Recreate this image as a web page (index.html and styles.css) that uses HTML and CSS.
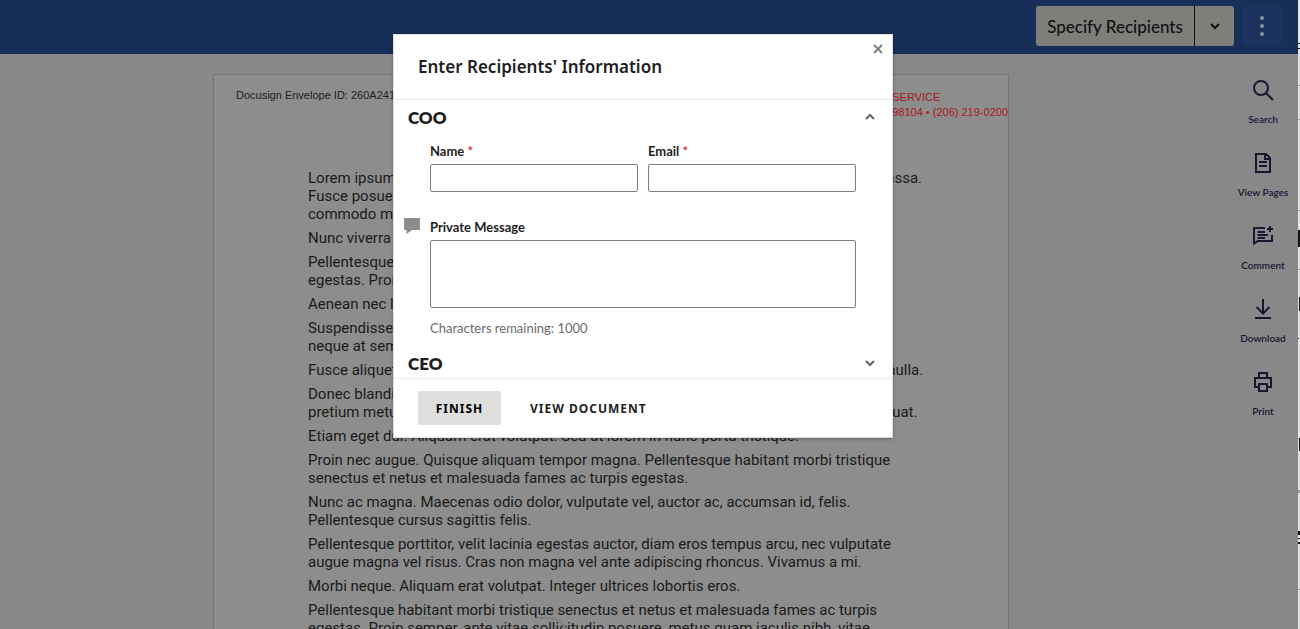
FILE: index.html
```html
<!DOCTYPE html>
<html lang="en">
<head>
<meta charset="utf-8">
<title>Specify Recipients</title>
<link rel="stylesheet" href="styles.css">
</head>
<body>
<div class="viewer">
  <header class="topbar">
    <div class="split">
      <button class="split-main" type="button">Specify Recipients</button>
      <button class="split-more" type="button" aria-label="More actions">
        <svg width="12" height="8" viewBox="0 0 12 8"><path d="M2 2l4 4 4-4" fill="none" stroke="#111" stroke-width="2"/></svg>
      </button>
    </div>
    <button class="menu" type="button" aria-label="Menu">
      <svg width="6" height="22" viewBox="0 0 6 22" fill="#8b93a5"><circle cx="3" cy="3" r="2"/><circle cx="3" cy="11" r="2"/><circle cx="3" cy="19" r="2"/></svg>
    </button>
  </header>
  <div class="workspace">
    <main class="canvas">
      <article class="page">
        <div class="page-head">
          <span class="envelope">Docusign Envelope ID: 260A2413</span>
          <div class="service"><span>SERVICE</span><span class="service-phone">98104 • (206) 219-0200</span></div>
        </div>
        <div class="copy">
          <p>Lorem ipsum dolor sit amet, consectetuer adipiscing elit. Maecenas porttitor congue massa.<br>Fusce posuere, magna sed pulvinar ultricies, purus lectus malesuada libero, sit amet<br>commodo magna eros quis urna.</p>
          <p>Nunc viverra imperdiet enim. Fusce est. Vivamus a tellus.</p>
          <p>Pellentesque habitant morbi tristique senectus et netus et malesuada fames ac turpis<br>egestas. Proin pharetra nonummy pede. Mauris et orci.</p>
          <p>Aenean nec lorem. In porttitor. Donec laoreet nonummy augue.</p>
          <p>Suspendisse dui purus, scelerisque at, vulputate vitae, pretium mattis, nunc. Mauris<br>neque at sem venenatis eleifend. Ut nonummy.</p>
          <p>Fusce aliquet pede non pede. Suspendisse dapibus lorem pellentesque magna. Integer nulla.</p>
          <p>Donec blandit feugiat ligula. Donec hendrerit, felis et imperdiet euismod, purus ipsum<br>pretium metus, in lacinia nulla nisl eget sapien. Donec ut est in lectus consequat consequat.</p>
          <p>Etiam eget dui. Aliquam erat volutpat. Sed at lorem in nunc porta tristique.</p>
          <p>Proin nec augue. Quisque aliquam tempor magna. Pellentesque habitant morbi tristique<br>senectus et netus et malesuada fames ac turpis egestas.</p>
          <p>Nunc ac magna. Maecenas odio dolor, vulputate vel, auctor ac, accumsan id, felis.<br>Pellentesque cursus sagittis felis.</p>
          <p>Pellentesque porttitor, velit lacinia egestas auctor, diam eros tempus arcu, nec vulputate<br>augue magna vel risus. Cras non magna vel ante adipiscing rhoncus. Vivamus a mi.</p>
          <p>Morbi neque. Aliquam erat volutpat. Integer ultrices lobortis eros.</p>
          <p>Pellentesque habitant morbi tristique senectus et netus et malesuada fames ac turpis<br>egestas. Proin semper, ante vitae sollicitudin posuere, metus quam iaculis nibh, vitae</p>
        </div>
        <svg class="watermark" width="150" height="14" viewBox="0 0 150 14" aria-hidden="true"><path d="M0 1h24M118 1h14q10 1 14 10" fill="none" stroke="#808080" stroke-width="2"/></svg>
      </article>
    </main>
    <nav class="tools">
      <button class="tool" type="button">
        <svg width="24" height="24" viewBox="0 0 24 24"><circle cx="10" cy="10" r="7"/><path d="M15 15l7 7"/></svg>
        <span>Search</span>
      </button>
      <button class="tool" type="button">
        <svg width="24" height="24" viewBox="0 0 24 24"><path d="M5 3h10l4 4v14H5zM14 3v5h5M8 11h8M8 15h8"/></svg>
        <span>View Pages</span>
      </button>
      <button class="tool" type="button">
        <svg width="24" height="24" viewBox="0 0 24 24"><path d="M14 4H3v15.500l4-2.500h14v-6M19 2v6M16 5h6M6.500 8H14M6.500 11H17M6.500 14H14"/></svg>
        <span>Comment</span>
      </button>
      <button class="tool" type="button">
        <svg width="24" height="24" viewBox="0 0 24 24"><path d="M12 2v14M5.500 10l6.500 6.500 6.500-6.500M4 21h16"/></svg>
        <span>Download</span>
      </button>
      <button class="tool" type="button">
        <svg width="24" height="24" viewBox="0 0 24 24"><path d="M8 8V3h8v5M8 17H4V8h16v9h-4M8 14h8v7H8z"/></svg>
        <span>Print</span>
      </button>
    </nav>
  </div>
  <div class="overlay">
    <form class="dialog" role="dialog" aria-labelledby="dialog-title">
      <button class="close" type="button" aria-label="Close">
        <svg width="10" height="10" viewBox="0 0 10 10"><path d="M1 1l8 8M9 1l-8 8" fill="none" stroke="#808080" stroke-width="2"/></svg>
      </button>
      <header class="dialog-head"><h1 id="dialog-title">Enter Recipients' Information</h1></header>
      <section class="role">
        <button class="role-head" type="button" aria-expanded="true">COO
          <svg width="12" height="8" viewBox="0 0 12 8"><path d="M2 6l4-4 4 4"/></svg>
        </button>
        <div class="role-body">
          <div class="pair">
            <div class="field"><label for="name">Name <span class="req">*</span></label><input id="name" type="text"></div>
            <div class="field"><label for="email">Email <span class="req">*</span></label><input id="email" type="email"></div>
          </div>
          <div class="field message">
            <svg class="bubble" width="16" height="16" viewBox="0 0 16 16"><path d="M1 0h14q1 0 1 1v10q0 1-1 1H8l-5.500 4V12H1q-1 0-1-1V1q0-1 1-1z" fill="#8c8c8c"/></svg>
            <label for="message">Private Message</label>
            <textarea id="message"></textarea>
            <span class="count">Characters remaining: 1000</span>
          </div>
        </div>
        <button class="role-head" type="button" aria-expanded="false">CEO
          <svg width="12" height="8" viewBox="0 0 12 8"><path d="M2 2l4 4 4-4"/></svg>
        </button>
      </section>
      <footer class="dialog-foot">
        <button class="finish" type="submit">FINISH</button>
        <button class="view" type="button">VIEW DOCUMENT</button>
      </footer>
    </form>
  </div>
</div>
<aside class="edge">
  <svg width="2" height="629" viewBox="0 0 2 629"><path d="M0 43h2v1H0zM0 48h2v1H0zM0 230h2v17H0zM1 297h1v14H1zM0 338h1v1H0zM1 438h1v13H1zM0 531h2v4H0zM0 538h2v1H0zM0 542h2v2H0z" fill="#111"/><path d="M0 85h2v1H0zM0 119h2v1H0zM0 210h2v1H0zM0 269h2v1H0zM0 490h2v3H0zM0 589h2v1H0z" fill="#999"/></svg>
</aside>
</body>
</html>
```
FILE: styles.css
```css
* { box-sizing: border-box; }
body {
  margin: 0;
  display: flex;
  height: 100vh;
  overflow: hidden;
  font-family: Lato, "Liberation Sans", sans-serif;
  color: #1e1e1e;
}
button { margin: 0; padding: 0; border: 0; background: none; font: inherit; color: inherit; cursor: pointer; }
svg { display: block; }

.viewer { position: relative; flex: 1; min-width: 0; display: flex; flex-direction: column; background: #888; }
.edge { flex: 0 0 2px; overflow: hidden; background: #e4e4e4; }

.topbar { flex: 0 0 54px; display: flex; justify-content: flex-end; align-items: flex-start; gap: 8px; padding: 6px 16px; background: #172f57; }
.split { display: flex; height: 40px; border-radius: 3px; overflow: hidden; background: #7e7e7b; color: #111; }
.split-main { width: 159px; border-right: 1px solid #111; font-size: 17px; font-weight: 500; }
.split-more { width: 39px; display: flex; align-items: center; justify-content: center; }
.menu { width: 40px; height: 40px; border-radius: 3px; display: flex; align-items: center; justify-content: center; background: #1b315e; }

.workspace { flex: 1; min-height: 0; display: flex; }
.canvas { flex: 1; padding-top: 20px; overflow: hidden; }
.page { position: relative; width: 796px; height: 1030px; margin: 0 auto; border: 1px solid #757575; background: #8d8d8d; font-family: Roboto, sans-serif; }
.page-head { display: flex; justify-content: space-between; height: 94px; padding: 13px 0 0 22px; font-family: "Liberation Sans", sans-serif; font-size: 11px; line-height: 15px; }
.service { display: flex; flex-direction: column; padding-top: 2px; color: #a8181c; }
.copy { padding-left: 94px; font-size: 15px; line-height: 18px; white-space: nowrap; color: #1a1a1a; }
.copy p { margin: 0 0 6px; }
.watermark { position: absolute; left: 205px; top: 542px; }

.tools { flex: 0 0 76px; padding: 24px 0 0 6px; display: flex; flex-direction: column; gap: 25px; color: #1e1432; }
.tool { display: flex; flex-direction: column; align-items: center; gap: 10px; font-size: 10px; line-height: 14px; font-weight: 600; }
.tool svg { fill: none; stroke: #1e1432; stroke-width: 2; }

.overlay { position: absolute; inset: 0; display: flex; justify-content: center; align-items: flex-start; padding: 34px 12px 0 0; }
.dialog { position: relative; width: 500px; border: 1px solid #e0e0e0; background: #fff; box-shadow: 0 1px 3px rgba(0, 0, 0, .3); }
.close { position: absolute; top: 9px; right: 9px; }
.dialog-head { padding: 21px 24px; border-bottom: 1px solid #e9e9e9; }
h1 { margin: 0; font-family: "Noto Sans", sans-serif; font-size: 17px; line-height: 22px; font-weight: 600; }
.role-head { display: flex; width: 100%; height: 32px; padding: 2px 16px 0 14px; justify-content: space-between; align-items: center; font-size: 17px; font-weight: 800; }
.role-head svg { fill: none; stroke: #666; stroke-width: 2; }
.role-body { padding: 11px 36px 10px; }
.pair { display: flex; gap: 10px; margin-bottom: 27px; }
.field { flex: 1; display: flex; flex-direction: column; font-size: 13px; line-height: 16px; }
.field label { margin-bottom: 5px; font-weight: 700; }
.req { color: #d13239; }
input, textarea { width: 100%; margin: 0; border: 1px solid #808080; border-radius: 2px; background: #fff; font: inherit; }
input { height: 28px; }
textarea { display: block; height: 68px; resize: none; }
.message { position: relative; }
.bubble { position: absolute; left: -26px; top: -1px; }
.count { margin-top: 12px; color: #6b6b6b; }
.dialog-foot { display: flex; gap: 29px; padding: 12px 24px; border-top: 1px solid #e9e9e9; font-family: "Noto Sans", sans-serif; font-size: 12px; font-weight: 700; }
.dialog-foot button { letter-spacing: 1px; }
.finish { width: 83px; height: 34px; border-radius: 2px; background: #dededd; color: #000; }
```
